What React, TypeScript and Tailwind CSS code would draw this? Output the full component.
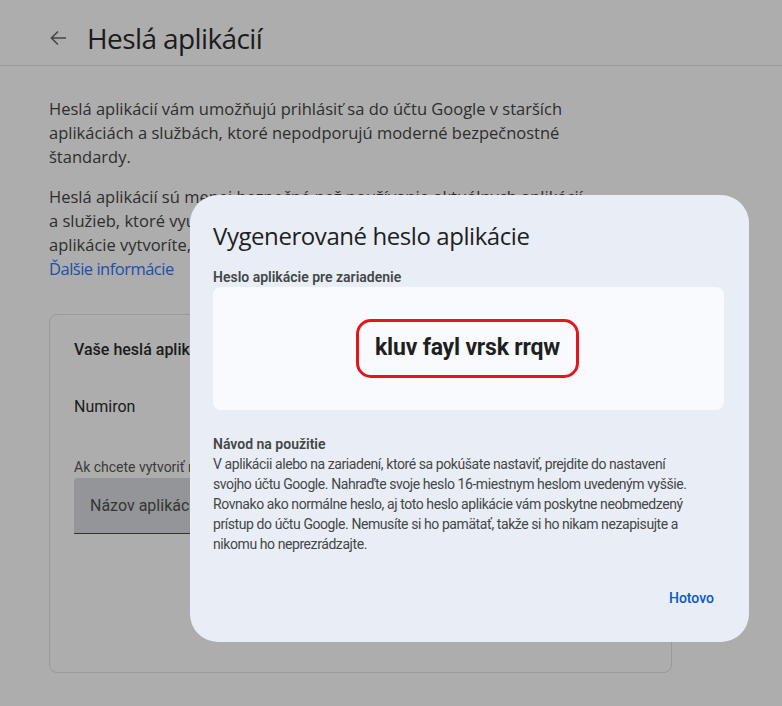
import React from "react";

export default function App() {
  return (
    <div className="relative w-[782px] h-[706px] overflow-hidden bg-[#adadad] font-['Roboto',sans-serif] text-[#2a2a2a]">
      {/* Header */}
      <div className="h-[66px] border-b border-[#999999] flex items-center pl-[46px] pt-[10px]">
        <svg width="24" height="24" viewBox="0 0 24 24" className="fill-[#444444]">
          <path d="M20 11.25H7.2l5.3-5.3-1.06-1.06L4.33 12l7.11 7.11 1.06-1.06-5.3-5.3H20z" />
        </svg>
        <div className="ml-[17px] text-[28px] leading-[36px] text-[#1b1b1b] font-['Open_Sans',sans-serif] tracking-[-0.6px]">Heslá aplikácií</div>
      </div>

      {/* Main */}
      <div className="pl-[49px] pt-[31px] font-['Open_Sans',sans-serif]">
        <p className="text-[16.5px] leading-[24px] text-[#2d2d2d]">
          Heslá aplikácií vám umožňujú prihlásiť sa do účtu Google v starších
          <br />
          aplikáciách a službách, ktoré nepodporujú moderné bezpečnostné
          <br />
          štandardy.
        </p>
        <p className="mt-[16px] text-[16.5px] leading-[24px] text-[#2d2d2d]">
          Heslá aplikácií sú menej bezpečné než používanie aktuálnych aplikácií
          <br />
          a služieb, ktoré využívajú moderné bezpečnostné štandardy. Pred tým, ako
          <br />
          aplikácie vytvoríte, skontrolujte, či ich vaša aplikácia potrebuje.
          <br />
          <span className="text-[#1d4fa8] tracking-[-0.5px]">Ďalšie informácie</span>
        </p>

        <div className="mt-[33px] w-[623px] h-[359px] rounded-[8px] border border-[#9a9a9a] pl-[24px] pt-[23px] font-['Roboto',sans-serif]">
          <div className="text-[16px] leading-[24px] font-medium text-[#1b1b1b]">Vaše heslá aplikácií</div>
          <div className="mt-[33px] text-[16px] leading-[24px] text-[#1b1b1b]">Numiron</div>
          <div className="mt-[38px] text-[14px] leading-[20px] text-[#3a3a3a]">
            Ak chcete vytvoriť nové heslo aplikácie, zadajte nižšie jej názov.
          </div>
          <div className="mt-[1px] w-[330px] h-[56px] rounded-t-[4px] bg-[#939598] border-b border-[#333333] flex items-center pl-[16px] text-[16px] text-[#353535]">
            Názov aplikácie
          </div>
        </div>
      </div>

      {/* Dialog */}
      <div className="absolute left-[190px] top-[195px] w-[559px] h-[447px] rounded-[28px] bg-[#e9eef6] px-[23px] pt-[25px] flex flex-col">
        <div className="text-[24px] leading-[32px] text-[#1f1f1f] font-['Open_Sans',sans-serif] tracking-[-0.43px]">Vygenerované heslo aplikácie</div>
        <div className="mt-[15px] text-[14px] leading-[20px] font-semibold text-[#444746]">Heslo aplikácie pre zariadenie</div>
        <div className="w-[511px] h-[123px] rounded-[8px] bg-[#f8fafd] flex items-center justify-center">
          <div className="-ml-[2px] w-[223px] h-[59px] rounded-[15px] border-[3px] border-[#e8141c] flex items-center justify-center">
            <span className="text-[23px] font-bold text-[#1f1f1f] tracking-[-0.2px]">kluv fayl vrsk rrqw</span>
          </div>
        </div>
        <div className="mt-[24px] text-[14px] leading-[20px] font-semibold text-[#444746]">Návod na použitie</div>
        <p className="text-[14px] leading-[20px] text-[#444746] tracking-[-0.42px]">
          V aplikácii alebo na zariadení, ktoré sa pokúšate nastaviť, prejdite do nastavení
          <br />
          svojho účtu Google. Nahraďte svoje heslo 16-miestnym heslom uvedeným vyššie.
          <br />
          Rovnako ako normálne heslo, aj toto heslo aplikácie vám poskytne neobmedzený
          <br />
          prístup do účtu Google. Nemusíte si ho pamätať, takže si ho nikam nezapisujte a
          <br />
          nikomu ho neprezrádzajte.
        </p>
        <div className="mt-[24px] flex justify-end pr-[12px]">
          <button className="h-[40px] text-[14px] font-medium text-[#0b57d0]">Hotovo</button>
        </div>
      </div>
    </div>
  );
}
